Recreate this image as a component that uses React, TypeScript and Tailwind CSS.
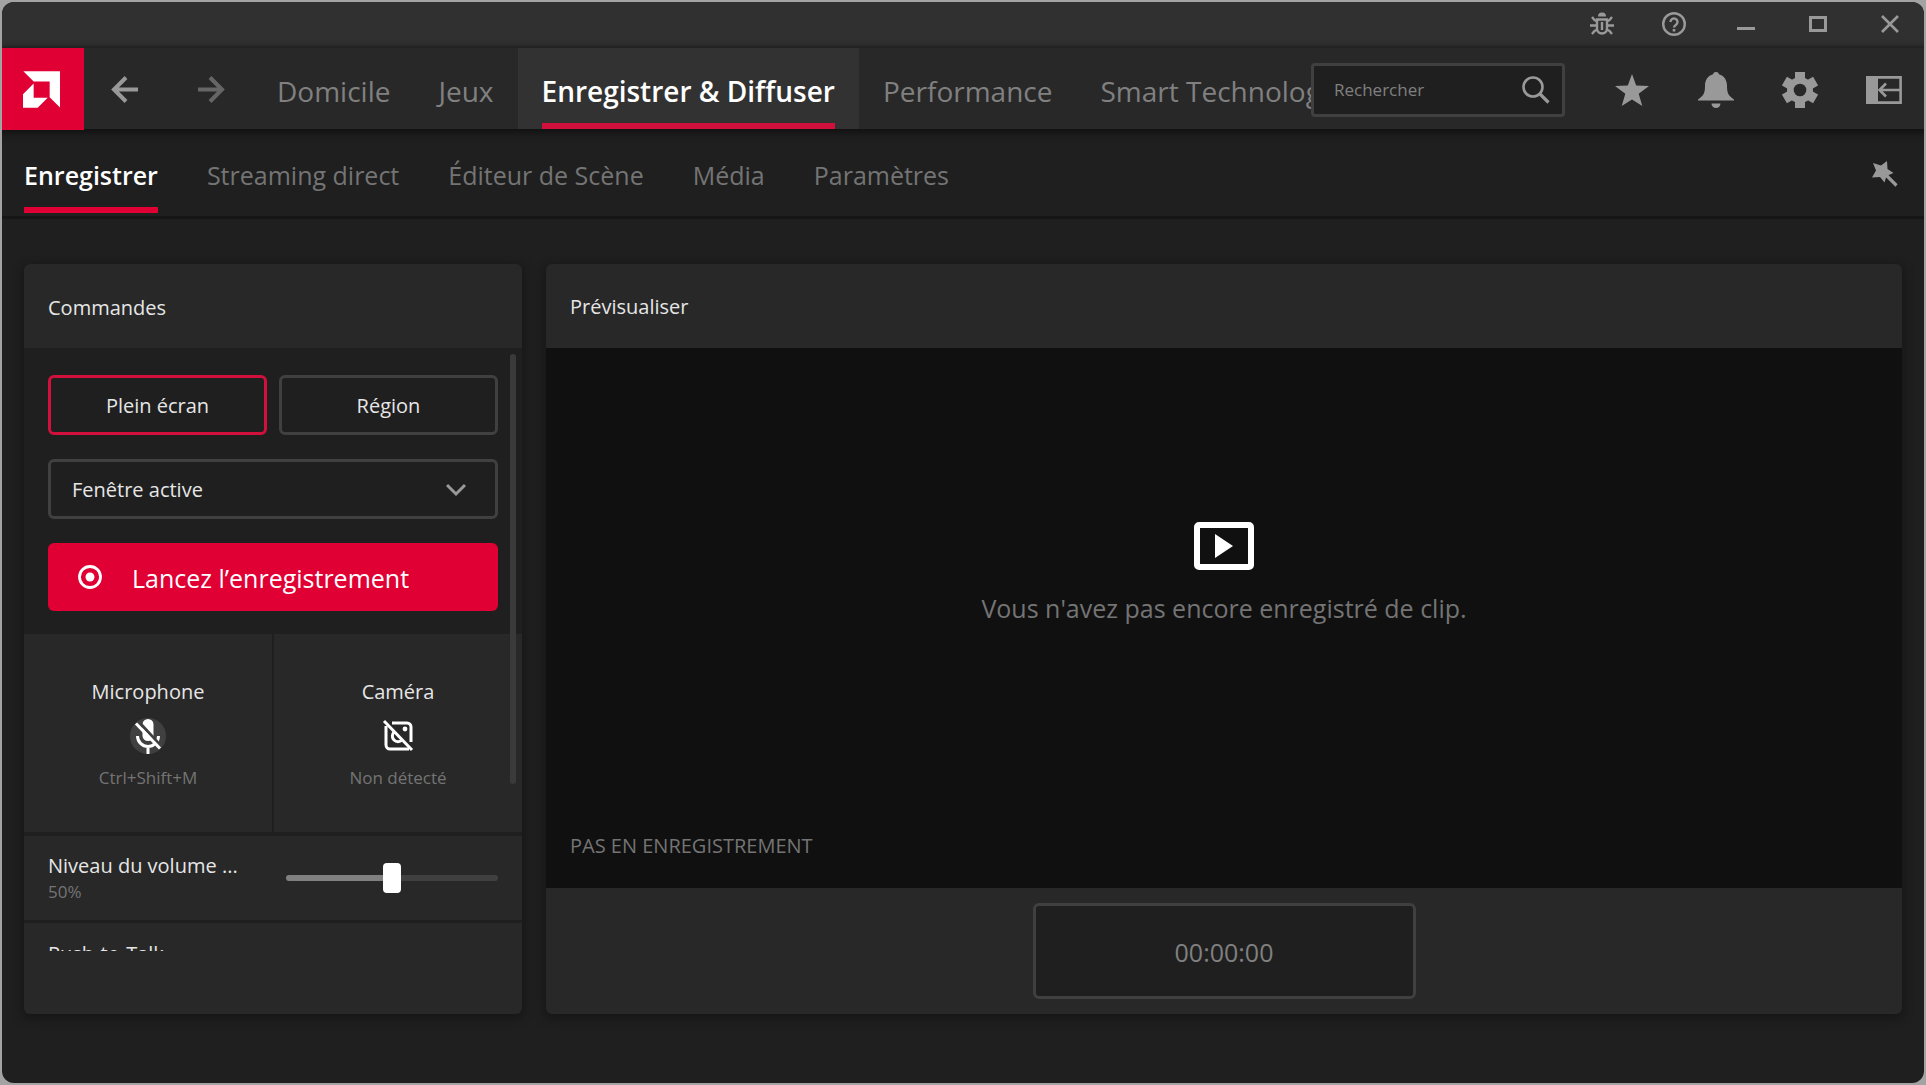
import { useState } from "react";
import type { ReactNode } from "react";

const mainTabs = [
  "Domicile",
  "Jeux",
  "Enregistrer & Diffuser",
  "Performance",
  "Smart Technology",
];

const subTabs = [
  "Enregistrer",
  "Streaming direct",
  "Éditeur de Scène",
  "Média",
  "Paramètres",
];

function IconButton({
  label,
  className,
  children,
}: {
  label: string;
  className: string;
  children: ReactNode;
}) {
  return (
    <button
      type="button"
      aria-label={label}
      className={`flex shrink-0 items-center justify-center ${className}`}
    >
      {children}
    </button>
  );
}

function TitleBar() {
  return (
    <div className="-mr-0.5 flex h-[46px] justify-end bg-[#303030] pb-0.5 text-[#999]">
      <IconButton label="Signaler un bug" className="w-18">
        <svg className="size-6" viewBox="0 0 24 24" fill="none" stroke="currentColor" strokeWidth="2.4">
          <path d="M8 4.500a4 4 0 0 1 8 0z" fill="currentColor" stroke="none" />
          <path d="M7 7.500h10v9a5 5 0 0 1-10 0z" />
          <path d="M0 13.500h6M18 13.500h6M2 5l2.500 3 3 1.500M22 5l-2.500 3-3 1.500M2 22l2.500-3 3-1.500M22 22l-2.500-3-3-1.500M12 10v8" />
        </svg>
      </IconButton>
      <IconButton label="Aide" className="w-18">
        <svg className="size-6" viewBox="0 0 24 24" fill="none" stroke="currentColor" strokeWidth="2.4">
          <circle cx="12" cy="12" r="10.800" />
          <path d="M8.500 10a3.500 3.500 0 1 1 5.500 2.800c-1.400 1-2 1.400-2 2.700" />
          <path d="M10.700 17h2.600v2.400h-2.600z" fill="currentColor" stroke="none" />
        </svg>
      </IconButton>
      <IconButton label="Réduire" className="w-18">
        <svg className="size-6" viewBox="0 0 24 24" fill="currentColor">
          <path d="M3 15h18v3H3z" />
        </svg>
      </IconButton>
      <IconButton label="Agrandir" className="w-18">
        <svg className="size-6" viewBox="0 0 24 24" fill="none" stroke="currentColor" strokeWidth="3">
          <path d="M4.500 5.500h15v13h-15z" />
        </svg>
      </IconButton>
      <IconButton label="Fermer" className="w-18">
        <svg className="size-6" viewBox="0 0 24 24" fill="none" stroke="currentColor" strokeWidth="2.600">
          <path d="M4 4l16 16M20 4L4 20" />
        </svg>
      </IconButton>
    </div>
  );
}

function NavBar() {
  return (
    <header className="relative z-10 -mr-0.5 flex h-[81px] bg-[#282828] text-[#999] shadow-[0_2px_6px_2px_#121212]">
      <a href="#accueil" aria-label="Accueil" className="flex h-[82px] w-[82px] shrink-0 items-center justify-center bg-[#e00034]">
        <svg className="mr-1 size-[37px] text-white" viewBox="0 0 111 110" fill="currentColor">
          <path d="M1 0h110v109L80 78V31H32z" />
          <path d="M32 37v43h42l-30 30H0V69z" />
        </svg>
      </a>
      <div className="flex shrink-0 items-center pt-0.5 pl-[26px]">
        <IconButton label="Précédent" className="size-[30px]">
          <svg className="size-[30px]" viewBox="0 0 30 30" fill="none" stroke="currentColor" strokeWidth="4">
            <path d="M28 14.500H4M16 2.500L4 14.500l12 12" />
          </svg>
        </IconButton>
        <IconButton label="Suivant" className="ml-14 size-[30px] text-[#666]">
          <svg className="size-[30px]" viewBox="0 0 30 30" fill="none" stroke="currentColor" strokeWidth="4">
            <path d="M2 14.500h24M14 2.500l12 12-12 12" />
          </svg>
        </IconButton>
      </div>
      <nav className="ml-[27px] flex min-w-0 flex-1 overflow-hidden text-[28px] text-[#808080]">
        {mainTabs.map((tab) =>
          tab === "Enregistrer & Diffuser" ? (
            <a key={tab} href="#enregistrer" className="flex shrink-0 bg-[#323232] px-6 font-semibold text-white">
              <span className="flex items-center rounded-t-sm border-b-6 border-[#d1103c] pt-2.5">{tab}</span>
            </a>
          ) : (
            <a key={tab} href="#" className="flex shrink-0 items-center px-6 pt-1 whitespace-nowrap">
              {tab}
            </a>
          ),
        )}
      </nav>
      <label className="mt-0.5 flex h-[54px] w-[254px] shrink-0 items-center self-center rounded-sm border-3 border-[#404040] bg-[#1f1f1f] pr-3 pl-5">
        <input
          type="search"
          aria-label="Rechercher"
          placeholder="Rechercher"
          className="min-w-0 flex-1 bg-transparent text-[17px] outline-none placeholder:text-[#808080]"
        />
        <svg className="size-[30px]" viewBox="0 0 30 30" fill="none" stroke="currentColor" strokeWidth="2.600">
          <circle cx="13" cy="12" r="9.500" />
          <path d="M19.500 18.500l9 9" strokeWidth="3.200" />
        </svg>
      </label>
      <div className="flex shrink-0 pt-0.5 pl-[25px]">
        <IconButton label="Favoris" className="w-[84px]">
          <svg className="size-9" viewBox="0 0 36 36" fill="currentColor">
            <path d="M18 2l4.200 11.500 12.800.4-10.300 7.800L28.300 34 18 27.600 7.700 34l3.600-12.300L1 13.900l12.800-.4z" />
          </svg>
        </IconButton>
        <IconButton label="Notifications" className="w-[84px]">
          <svg className="size-9" viewBox="0 0 36 36" fill="currentColor">
            <path d="M18 0a3 3 0 0 1 3 2.200c5 1.400 8 5.800 8 11.300 0 7 1 10 7 14v1H0v-1c6-4 7-7 7-14C7 8 10 3.600 15 2.200A3 3 0 0 1 18 0z" />
            <path d="M13.500 31.500h9a4.500 4.500 0 0 1-9 0z" />
          </svg>
        </IconButton>
        <IconButton label="Paramètres généraux" className="w-[84px]">
          <svg className="size-9" viewBox="-18 -18 36 36" fill="currentColor">
            {[0, 60, 120].map((angle) => (
              <path key={angle} d="M-5-18H5v36H-5z" transform={`rotate(${angle})`} />
            ))}
            <path d="M0-13a13 13 0 1 0 0 26a13 13 0 1 0 0-26z" />
            <circle r="6.300" fill="#282828" />
          </svg>
        </IconButton>
        <IconButton label="Réduire le panneau" className="w-[84px]">
          <svg className="size-9" viewBox="0 0 36 36" fill="none" stroke="currentColor" strokeWidth="2.600">
            <path d="M0 4h12v28H0z" fill="currentColor" stroke="none" />
            <path d="M10 5.400h24.600v25.200H10M34 18H14M20 11.500L13.500 18l6.500 6.500" />
          </svg>
        </IconButton>
      </div>
    </header>
  );
}

function SubNav() {
  return (
    <div className="flex h-[90px] items-center justify-between border-b-3 border-[#161616] pr-[26px] pl-[22px]">
      <nav className="flex gap-[49px] self-stretch text-[25px] text-[#747474]">
        {subTabs.map((tab, i) => (
          <a
            key={tab}
            href="#"
            className={
              i === 0
                ? "mb-[3px] flex items-center border-b-6 border-[#e00034] pt-4 font-semibold text-white"
                : "mb-[3px] flex items-center border-b-6 border-transparent pt-4"
            }
          >
            {tab}
          </a>
        ))}
      </nav>
      <IconButton label="Assistant" className="mt-0.5 size-7 text-[#999]">
        <svg className="size-7" viewBox="0 0 28 28" fill="currentColor">
          <path d="M3 3l8 2.500L17 1l.5 8 6 4-7 3-2 6.500-4.500-5.500-8 .5 4-7z" />
          <path d="M15 14l11.500 11.500" stroke="currentColor" strokeWidth="3.200" />
        </svg>
      </IconButton>
    </div>
  );
}

function MicOffIcon() {
  return (
    <svg className="size-9" viewBox="0 0 36 36" fill="none">
      <circle cx="18" cy="18" r="18" fill="#404040" />
      <rect x="12.500" y="1" width="11" height="22" rx="5.500" fill="#fff" />
      <path d="M7.500 18a10.500 10.500 0 0 0 21 0M18 28v8" stroke="#fff" strokeWidth="3" />
      <path d="M8.500 3.500l23 25" stroke="#404040" strokeWidth="3" />
      <path d="M6 5.500l24 25" stroke="#fff" strokeWidth="3" />
    </svg>
  );
}

function CameraOffIcon() {
  return (
    <svg className="size-9" viewBox="0 0 36 36" fill="none" stroke="#fff" strokeWidth="3">
      <path d="M12 5h15a4 4 0 0 1 4 4v15M6 8v19a4 4 0 0 0 4 4h19" />
      <path d="M14 14a5.500 5.500 0 0 0 8 8" />
      <circle cx="25" cy="11" r="2.400" fill="#fff" stroke="none" />
      <path d="M4 3l28 29" />
    </svg>
  );
}

function SourceTile({ title, hint, icon }: { title: string; hint: string; icon: ReactNode }) {
  return (
    <button type="button" className="flex h-[198px] flex-col items-center bg-[#282828] pt-11">
      <span className="text-[20px] leading-7">{title}</span>
      <span className="mt-3">{icon}</span>
      <span className="mt-3 text-[17px] leading-6 text-[#747474]">{hint}</span>
    </button>
  );
}

function Controls() {
  const [mode, setMode] = useState("Plein écran");
  const [volume, setVolume] = useState(50);

  return (
    <section className="relative flex w-[498px] shrink-0 flex-col rounded-md bg-[#282828] text-[20px] text-[#e6e6e6] shadow-[0_3px_8px_2px_#171717]">
      <h2 className="flex h-[84px] shrink-0 items-center px-6 pt-1">Commandes</h2>
      <div className="min-h-[560px] shrink grow basis-[0px] overflow-hidden bg-[#1f1f1f]">
        <div className="flex flex-col gap-6 px-6 pt-[27px] pb-[23px]">
          <div className="grid grid-cols-2 gap-3">
            {["Plein écran", "Région"].map((name) => (
              <button
                key={name}
                type="button"
                aria-pressed={mode === name}
                onClick={() => setMode(name)}
                className={
                  mode === name
                    ? "h-[60px] rounded-md border-3 border-[#d1103c] pt-0.5"
                    : "h-[60px] rounded-md border-3 border-[#404040] pt-0.5"
                }
              >
                {name}
              </button>
            ))}
          </div>
          <div className="relative">
            <select
              aria-label="Source"
              className="h-[60px] w-full appearance-none rounded-md border-3 border-[#404040] bg-[#1f1f1f] px-[21px] pt-0.5"
            >
              <option>Fenêtre active</option>
            </select>
            <svg
              className="pointer-events-none absolute top-5 right-8 size-5 text-[#999]"
              viewBox="0 0 20 20"
              fill="none"
              stroke="currentColor"
              strokeWidth="3"
            >
              <path d="M1 6l9 9 9-9" />
            </svg>
          </div>
          <button type="button" className="flex h-[68px] items-center gap-[30px] rounded-md bg-[#e00034] px-[30px] text-[25px] text-white">
            <svg className="size-6" viewBox="0 0 24 24">
              <circle cx="12" cy="12" r="10.500" fill="none" stroke="currentColor" strokeWidth="2.800" />
              <circle cx="12" cy="12" r="4.500" fill="currentColor" />
            </svg>
            <span className="pt-1">Lancez l’enregistrement</span>
          </button>
        </div>
        <div className="grid grid-cols-2 gap-0.5">
          <SourceTile title="Microphone" hint="Ctrl+Shift+M" icon={<MicOffIcon />} />
          <SourceTile title="Caméra" hint="Non détecté" icon={<CameraOffIcon />} />
        </div>
        <div className="mt-1 flex h-[84px] items-center justify-between bg-[#282828] px-6">
          <label htmlFor="volume" className="flex flex-col">
            <span className="leading-7">Niveau du volume ...</span>
            <span className="text-[17px] leading-6 text-[#747474]">{volume}%</span>
          </label>
          <input
            id="volume"
            type="range"
            value={volume}
            onChange={(e) => setVolume(Number(e.target.value))}
            className="h-[30px] w-[212px] appearance-none bg-transparent [&::-webkit-slider-runnable-track]:h-1.5 [&::-webkit-slider-runnable-track]:rounded-full [&::-webkit-slider-runnable-track]:bg-linear-to-r [&::-webkit-slider-runnable-track]:from-[#808080] [&::-webkit-slider-runnable-track]:from-50% [&::-webkit-slider-runnable-track]:to-[#404040] [&::-webkit-slider-runnable-track]:to-50% [&::-webkit-slider-thumb]:-mt-3 [&::-webkit-slider-thumb]:h-[30px] [&::-webkit-slider-thumb]:w-[18px] [&::-webkit-slider-thumb]:appearance-none [&::-webkit-slider-thumb]:rounded-sm [&::-webkit-slider-thumb]:bg-white"
          />
        </div>
        <div className="mt-[3px] h-[84px] bg-[#282828] px-6 pt-4">Push-to-Talk</div>
      </div>
      <div className="h-[63px] shrink-0" />
      <div className="absolute top-[90px] right-[6px] h-[430px] w-1.5 rounded-full bg-[#3a3a3a]" />
    </section>
  );
}

function Preview() {
  return (
    <section className="flex min-w-0 flex-1 flex-col rounded-md bg-[#282828] text-[20px] shadow-[0_3px_8px_2px_#171717]">
      <h2 className="flex h-[84px] items-center px-6 pt-0.5 text-[#e6e6e6]">Prévisualiser</h2>
      <div className="flex flex-1 flex-col bg-[#101010] px-6 pb-7 text-[#747474]">
        <div className="flex flex-1 flex-col items-center justify-center pb-8">
          <svg className="h-12 w-[60px] text-white" viewBox="0 0 60 48" fill="currentColor">
            <rect x="3" y="3" width="54" height="42" rx="2" fill="none" stroke="currentColor" strokeWidth="6" />
            <path d="M21 12v24l18-12z" />
          </svg>
          <p className="mt-5 text-[25px] leading-9">Vous n'avez pas encore enregistré de clip.</p>
        </div>
        <p className="leading-7">PAS EN ENREGISTREMENT</p>
      </div>
      <div className="flex h-[126px] items-center justify-center">
        <output className="flex h-24 w-[383px] items-center justify-center rounded-md border-3 border-[#404040] bg-[#1f1f1f] pt-1 text-[25px] text-[#808080]">
          00:00:00
        </output>
      </div>
    </section>
  );
}

export default function App() {
  return (
    <div className="flex min-h-screen flex-col bg-[#a3a3a3] p-0.5 font-['Open_Sans','Noto_Sans',sans-serif]">
      <div className="flex flex-1 flex-col overflow-hidden rounded-xl bg-[#1f1f1f]">
        <TitleBar />
        <NavBar />
        <SubNav />
        <main className="flex flex-1 gap-6 px-[22px] pt-[45px] pb-[69px]">
          <Controls />
          <Preview />
        </main>
      </div>
    </div>
  );
}
